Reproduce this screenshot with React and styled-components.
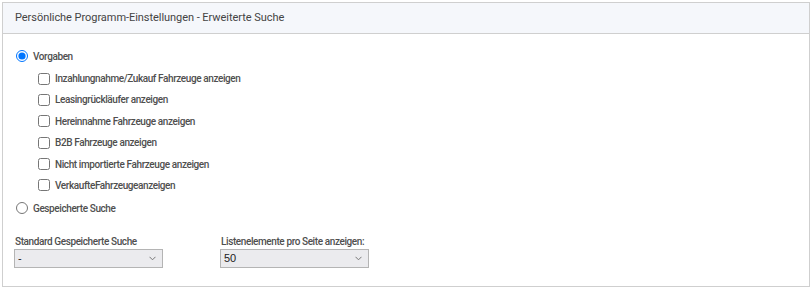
import React from "react";
import styled, { createGlobalStyle } from "styled-components";

const Global = createGlobalStyle`
  html, body { margin: 0; padding: 0; background: #fff; }
  body { font-family: Roboto, "Liberation Sans", Arial, sans-serif; }
  #root { padding: 2px 2px 0 2px; }
`;

const Panel = styled.section`
  width: 808px;
  height: 285px;
  box-sizing: border-box;
  border: 1px solid #cfcfcf;
  background: #fff;
  color: #4f4f4f;
  font-size: 10px;
  font-weight: 500;
  letter-spacing: -0.4px;
  display: flex;
  flex-direction: column;
`;

const Header = styled.div`
  height: 31px;
  box-sizing: border-box;
  background: #f5f7fb;
  border-bottom: 1px solid #cfcfcf;
  display: flex;
  align-items: center;
  padding: 0 0 1px 12px;
  font-size: 11px;
  font-weight: 400;
  letter-spacing: -0.05px;
  color: #444;
`;

const Body = styled.div`
  padding: 15px 12px 0 12px;
  display: flex;
  flex-direction: column;
`;

const RadioRow = styled.label`
  display: flex;
  align-items: center;
  height: 14px;
  gap: 5px;
`;

const Radio = styled.input.attrs({ type: "radio" })`
  margin: 0 0 0 1px;
  width: 12px;
  height: 12px;
  accent-color: #0075ff;
`;

const CheckList = styled.div`
  display: flex;
  flex-direction: column;
  padding: 9.5px 0 10px 22px;
  gap: 9.4px;
`;

const CheckRow = styled.label`
  display: flex;
  align-items: center;
  height: 12px;
  gap: 5px;
`;

const Check = styled.input.attrs({ type: "checkbox" })`
  margin: 0 0 0 1px;
  width: 12px;
  height: 12px;
`;

const Fields = styled.div`
  display: flex;
  gap: 58px;
  margin-top: 19.5px;
`;

const Field = styled.div`
  display: flex;
  flex-direction: column;
  gap: 1px;
`;

const FieldLabel = styled.label`
  line-height: 13px;
`;

const SelectBox = styled.div`
  position: relative;
  width: 149px;
  height: 19px;
  margin-left: -1px;
`;

const Select = styled.select`
  appearance: none;
  width: 100%;
  height: 100%;
  box-sizing: border-box;
  border: 1px solid #b4b4b4;
  background: #ebebee;
  font-family: "Liberation Sans", Arial, sans-serif;
  font-size: 11px;
  color: #222;
  padding: 0 0 0 3px;
  border-radius: 0;
  outline: none;
`;

const Chevron = styled.svg`
  position: absolute;
  right: 7px;
  top: 7px;
  pointer-events: none;
`;

const options = [
  "Inzahlungnahme/Zukauf Fahrzeuge anzeigen",
  "Leasingrückläufer anzeigen",
  "Hereinnahme Fahrzeuge anzeigen",
  "B2B Fahrzeuge anzeigen",
  "Nicht importierte Fahrzeuge anzeigen",
  "VerkaufteFahrzeugeanzeigen",
];

function Dropdown({ value, items }) {
  return (
    <SelectBox>
      <Select defaultValue={value}>
        {items.map((i) => (
          <option key={i}>{i}</option>
        ))}
      </Select>
      <Chevron width="7" height="5" viewBox="0 0 7 5">
        <path d="M0.5 0.8 L3.5 3.8 L6.5 0.8" fill="none" stroke="#777" strokeWidth="1" />
      </Chevron>
    </SelectBox>
  );
}

export default function App() {
  return (
    <>
      <Global />
      <Panel>
        <Header>Persönliche Programm-Einstellungen - Erweiterte Suche</Header>
        <Body>
          <RadioRow>
            <Radio name="mode" defaultChecked />
            Vorgaben
          </RadioRow>
          <CheckList>
            {options.map((o) => (
              <CheckRow key={o}>
                <Check />
                {o}
              </CheckRow>
            ))}
          </CheckList>
          <RadioRow>
            <Radio name="mode" />
            Gespeicherte Suche
          </RadioRow>
          <Fields>
            <Field>
              <FieldLabel>Standard Gespeicherte Suche</FieldLabel>
              <Dropdown value="-" items={["-"]} />
            </Field>
            <Field>
              <FieldLabel>Listenelemente pro Seite anzeigen:</FieldLabel>
              <Dropdown value="50" items={["10", "20", "50", "100"]} />
            </Field>
          </Fields>
        </Body>
      </Panel>
    </>
  );
}
